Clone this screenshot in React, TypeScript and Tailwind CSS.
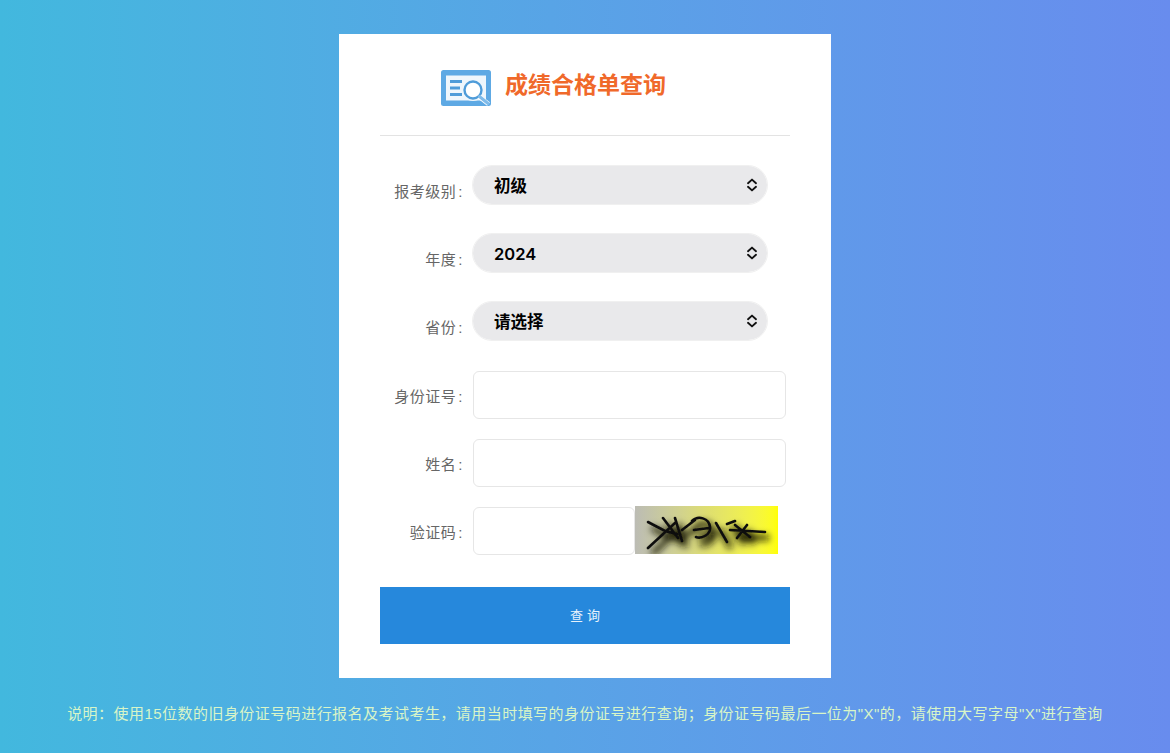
import React from 'react';

const FONT = "font-['Liberation_Sans','Noto_Sans_CJK_SC',sans-serif]";

const Logo = () => (
  <svg width="50" height="36" viewBox="0 0 50 36" fill="none">
    <rect width="50" height="36" rx="2.5" fill="#5ea9e4" />
    <rect x="5" y="5.5" width="40" height="25" fill="#eef6fc" />
    <path d="M9 11.5h12M9 18h10M9 24.5h12" stroke="#4f9cd9" strokeWidth="3" />
    <circle cx="32" cy="20" r="10" fill="#ffffff" stroke="#eef6fc" strokeWidth="2" />
    <circle cx="32" cy="20" r="8.5" fill="#ffffff" stroke="#4f9cd9" strokeWidth="2.4" />
    <path d="M38.5 27l9 7" stroke="#ffffff" strokeWidth="4.5" />
    <path d="M38.5 26.5l8.5 7" stroke="#7fbbea" strokeWidth="3" strokeLinecap="round" />
  </svg>
);

const Updown = () => (
  <svg width="12" height="14" viewBox="0 0 12 14" fill="none" stroke="#111111" strokeWidth="1.9" strokeLinecap="round" strokeLinejoin="round">
    <path d="M2 5.2L6 1.6l4 3.6" />
    <path d="M2 8.8l4 3.6 4-3.6" />
  </svg>
);

const Captcha = () => {
  const strokes =
    'M13 16L30 25L42 28M13 42L40 17M28 12L43 32M40 12L47 35M47 24L60 14M57 15C63 9 74 12 75 21C76 29 66 33 61 31M59 24L74 22M81 17L92 36M92 18L100 15M100 19L115 31M112 19L102 32M95 24L130 26';
  return (
    <div className="h-[48px] w-[143px] bg-gradient-to-r from-[#bcbcb4] via-[#dede70] via-50% to-[#ffff00]">
      <svg width="143" height="48" viewBox="0 0 143 48" fill="none">
        <defs>
          <filter id="captcha-shadow" x="-20%" y="-40%" width="140%" height="180%">
            <feGaussianBlur stdDeviation="3.5" />
          </filter>
          <filter id="captcha-soft">
            <feGaussianBlur stdDeviation="0.45" />
          </filter>
        </defs>
        <path d={strokes} transform="translate(4 6)" stroke="#151500" strokeWidth="5" filter="url(#captcha-shadow)" />
        <path d={strokes} stroke="#0d0d0d" strokeWidth="2.6" strokeLinecap="round" filter="url(#captcha-soft)" />
      </svg>
    </div>
  );
};

const Label = ({ children }: { children: React.ReactNode }) => (
  <label className="w-[83px] whitespace-nowrap pt-[16px] text-right text-[15px] leading-[20px] tracking-[0.5px] text-[#666666]">
    {children}
    <span className="ml-[2px]">:</span>
  </label>
);

const SelectRow = ({ label, value, last }: { label: string; value: string; last?: boolean }) => (
  <div className={`flex items-start gap-[10px] ${last ? 'mb-[31px]' : 'mb-[30px]'}`}>
    <Label>{label}</Label>
    <div className="relative h-[38px] w-[294px]">
      <select
        defaultValue={value}
        className="h-full w-full appearance-none rounded-[19px] bg-[#e9e9eb] pl-[21px] pt-[3px] font-['Inter','Noto_Sans_CJK_SC',sans-serif] text-[16.5px] font-semibold text-black outline outline-1 outline-[#f0f0f0]"
      >
        <option>{value}</option>
      </select>
      <span className="pointer-events-none absolute right-[9px] top-[12px]">
        <Updown />
      </span>
    </div>
  </div>
);

const InputRow = ({ label }: { label: string }) => (
  <div className="mb-[20px] flex items-start gap-[10px]">
    <Label>{label}</Label>
    <input className="h-[48px] w-[313px] rounded-[6px] border border-[#e6e6e6] bg-white outline-none" />
  </div>
);

export default function App() {
  return (
    <div className={`flex h-[753px] w-[1170px] flex-col items-center overflow-hidden bg-gradient-to-r from-[#42b8de] to-[#688cee] pt-[34px] ${FONT}`}>
      <div className="h-[644px] w-[492px] bg-white px-[41px]">
        <div className="mb-[30px] flex h-[102px] items-center border-b border-[#e3e3e3] pl-[61px] pt-[6px]">
          <Logo />
          <h1 className="mb-[6px] ml-[14px] text-[23px] font-bold leading-[30px] text-[#f0692a]">成绩合格单查询</h1>
        </div>

        <SelectRow label="报考级别" value="初级" />
        <SelectRow label="年度" value="2024" />
        <SelectRow label="省份" value="请选择" last />
        <InputRow label="身份证号" />
        <InputRow label="姓名" />

        <div className="mb-[32px] flex items-start gap-[10px]">
          <Label>验证码</Label>
          <input className="h-[48px] w-[162px] rounded-[6px] border border-[#e6e6e6] bg-white outline-none" />
          <div className="-ml-[10px] -mt-[1px]">
            <Captcha />
          </div>
        </div>

        <button className="h-[57px] w-full bg-[#2688dc] pl-[4px] text-[13px] tracking-[4px] text-[#e6f2fb]">查询</button>
      </div>

      <p className="mt-[25px] whitespace-nowrap text-[15px] leading-[22px] tracking-[0.46px] text-[#d8f5c8]">
        {'说明\uFF1A使用15位数的旧身份证号码进行报名及考试考生\uFF0C请用当时填写的身份证号进行查询\uFF1B身份证号码最后一位为"X"的\uFF0C请使用大写字母"X"进行查询'}
      </p>
    </div>
  );
}
